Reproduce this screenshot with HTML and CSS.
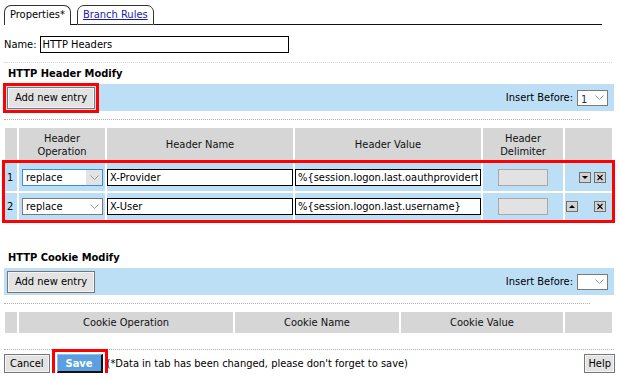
FILE: index.html
```html
<!DOCTYPE html>
<html lang="en">
<head>
    <meta charset="UTF-8">
    <title>HTTP Headers - Properties</title>
    <link rel="stylesheet" href="styles.css">
</head>
<body>
    <!-- Tabs -->
    <div class="tabs">
        <div class="tab active">Properties*</div>
        <div class="tab-gap"></div>
        <div class="tab"><a href="#">Branch Rules</a></div>
        <div class="tab-fill"></div>
    </div>

    <div class="name-row">
        <label>Name:</label>
        <input class="text name-input" type="text" value="HTTP Headers">
    </div>

    <div class="dots light"></div>

    <!-- Header modify -->
    <h3 class="section-title">HTTP Header Modify</h3>
    <div class="toolbar">
        <button class="btn marked">Add new entry</button>
        <div class="insert">
            Insert Before:
            <span class="combo small">
                <span class="combo-value num">1</span>
                <span class="combo-arrow"><svg width="9" height="5" viewBox="0 0 9 5"><path d="M0.5 0.5l4 4 4-4" fill="none" stroke="#9a9a9a"/></svg></span>
            </span>
        </div>
    </div>
    <div class="dots short"></div>

    <div class="grid header-grid">
        <div class="cols head">
            <div class="cell"></div>
            <div class="cell">Header<br>Operation</div>
            <div class="cell">Header Name</div>
            <div class="cell">Header Value</div>
            <div class="cell">Header<br>Delimiter</div>
            <div class="cell"></div>
        </div>
        <div class="rows marked-rows">
            <div class="cols row first">
                <div class="cell idx">1</div>
                <div class="cell">
                    <span class="combo focus">
                        <span class="combo-value">replace</span>
                        <span class="combo-arrow"><svg width="9" height="5" viewBox="0 0 9 5"><path d="M0.5 0.5l4 4 4-4" fill="none" stroke="#9a9a9a"/></svg></span>
                    </span>
                </div>
                <div class="cell"><input class="text" type="text" value="X-Provider"></div>
                <div class="cell"><input class="text" type="text" value="%{session.logon.last.oauthprovidertype}"></div>
                <div class="cell center"><span class="disabled-box"></span></div>
                <div class="cell actions">
                    <span class="mini hidden"></span>
                    <span class="mini"><svg width="12" height="11" viewBox="0 0 12 11"><rect x="0.5" y="0.5" width="11" height="10" fill="#d3d3d3" stroke="#707070"/><path d="M3 4h6l-3 3z" fill="#000"/></svg></span>
                    <span class="mini close"><svg width="12" height="11" viewBox="0 0 12 11"><rect x="0.5" y="0.5" width="11" height="10" fill="#d3d3d3" stroke="#707070"/><path d="M3.5 3l5 5M8.5 3l-5 5" stroke="#000" stroke-width="1.1"/></svg></span>
                </div>
            </div>
            <div class="cols row">
                <div class="cell idx">2</div>
                <div class="cell">
                    <span class="combo">
                        <span class="combo-value">replace</span>
                        <span class="combo-arrow"><svg width="9" height="5" viewBox="0 0 9 5"><path d="M0.5 0.5l4 4 4-4" fill="none" stroke="#9a9a9a"/></svg></span>
                    </span>
                </div>
                <div class="cell"><input class="text" type="text" value="X-User"></div>
                <div class="cell"><input class="text" type="text" value="%{session.logon.last.username}"></div>
                <div class="cell center"><span class="disabled-box"></span></div>
                <div class="cell actions">
                    <span class="mini"><svg width="12" height="11" viewBox="0 0 12 11"><rect x="0.5" y="0.5" width="11" height="10" fill="#d3d3d3" stroke="#707070"/><path d="M3 7h6l-3-3z" fill="#000"/></svg></span>
                    <span class="mini hidden"></span>
                    <span class="mini close"><svg width="12" height="11" viewBox="0 0 12 11"><rect x="0.5" y="0.5" width="11" height="10" fill="#d3d3d3" stroke="#707070"/><path d="M3.5 3l5 5M8.5 3l-5 5" stroke="#000" stroke-width="1.1"/></svg></span>
                </div>
            </div>
        </div>
    </div>

    <!-- Cookie modify -->
    <h3 class="section-title cookie-title">HTTP Cookie Modify</h3>
    <div class="toolbar">
        <button class="btn">Add new entry</button>
        <div class="insert">
            Insert Before:
            <span class="combo small">
                <span class="combo-value"></span>
                <span class="combo-arrow"><svg width="9" height="5" viewBox="0 0 9 5"><path d="M0.5 0.5l4 4 4-4" fill="none" stroke="#9a9a9a"/></svg></span>
            </span>
        </div>
    </div>
    <div class="dots short"></div>

    <div class="grid cookie-grid">
        <div class="cols head">
            <div class="cell"></div>
            <div class="cell">Cookie Operation</div>
            <div class="cell">Cookie Name</div>
            <div class="cell">Cookie Value</div>
            <div class="cell"></div>
        </div>
    </div>

    <div class="dots wide"></div>

    <div class="footer">
        <button class="btn">Cancel</button>
        <button class="btn save">Save</button>
        <span class="note">(*Data in tab has been changed, please don't forget to save)</span>
        <button class="btn help">Help</button>
    </div>
</body>
</html>
```

FILE: styles.css
```css
body {
    margin: 0;
    padding: 5px 0 0 4px;
    font-family: "DejaVu Sans Condensed", "DejaVu Sans", sans-serif;
    font-size: 11px;
    color: #000;
    background: #fff;
}

/* tabs */
.tabs {
    display: flex;
    align-items: flex-end;
    width: 598px;
    height: 20px;
}
.tab {
    height: 18px;
    line-height: 18px;
    padding: 0 5px;
    border: 1px solid #333;
    border-radius: 7px 7px 0 0;
    background: #fff;
}
.tab.active {
    border-bottom: none;
    height: 19px;
}
.tab a {
    color: #1a1aa6;
}
.tab-gap {
    width: 6px;
    border-bottom: 1px solid #111;
}
.tab-fill {
    flex: 1;
    border-bottom: 1px solid #111;
}

.name-row {
    display: flex;
    align-items: center;
    gap: 3px;
    margin-top: 11px;
}
.text {
    box-sizing: border-box;
    height: 17px;
    padding: 0 2px;
    border: 1px solid #000;
    font: inherit;
    color: #000;
    background: #fff;
    width: 100%;
}
.name-input {
    width: 249px;
}

.dots {
    width: 608px;
    margin-top: 9px;
    border-top: 1px dotted #b0b0b0;
}
.dots.light {
    border-top-color: #d6d6d6;
}
.dots.short {
    width: 586px;
    margin-top: 8px;
}
.dots.wide {
    width: 610px;
    margin-top: 16px;
}

.section-title {
    margin: 4px 0 3px 4px;
    font-size: 11px;
    line-height: 14px;
}
.cookie-title {
    margin-top: 31px;
}

.toolbar {
    display: flex;
    align-items: center;
    justify-content: space-between;
    width: 610px;
    height: 27px;
    box-sizing: border-box;
    padding: 0 6px 0 3px;
    background: #bcdff5;
}
.insert {
    display: flex;
    align-items: center;
    gap: 4px;
}

.btn {
    height: 22px;
    padding: 0 7px;
    border: 1px solid #777;
    background: #e3e3e3;
    box-shadow: inset 0 0 0 1px #f4f4f4;
    font: inherit;
    color: #000;
}
.btn.marked {
    outline: 3px solid #f00;
    outline-offset: 1px;
}

.combo {
    display: inline-flex;
    align-items: stretch;
    box-sizing: border-box;
    width: 81px;
    height: 17px;
    border: 1px solid #7a7a7a;
    background: #fff;
}
.combo.small {
    width: 31px;
    height: 16px;
}
.combo.focus {
    border-color: #3a8fd8;
}
.combo-value {
    flex: 1;
    padding-left: 3px;
    line-height: 15px;
}
.combo-value.num {
    color: #1c2c6a;
    padding-top: 1px;
}
.combo-arrow {
    display: flex;
    align-items: center;
    justify-content: center;
    width: 16px;
}
.combo.focus .combo-arrow {
    background: #e3e3e3;
}

/* grids */
.grid {
    margin-top: 8px;
    margin-left: 1px;
    width: 607px;
}
.cols {
    display: grid;
    column-gap: 2px;
}
.header-grid .cols {
    grid-template-columns: 12px 86px 186px 186px 80px 47px;
}
.cookie-grid .cols {
    grid-template-columns: 12px 214px 164px 162px 47px;
}
.head {
    height: 33px;
}
.cookie-grid .head {
    height: 21px;
}
.head .cell {
    display: flex;
    align-items: center;
    justify-content: center;
    text-align: center;
    line-height: 13px;
    background: #d6d6d6;
    color: #111;
}

.rows {
    margin-top: 2px;
    display: flex;
    flex-direction: column;
    gap: 2px;
}
.marked-rows {
    outline: 3px solid #f00;
    outline-offset: 0;
}
.row {
    height: 27px;
}
.row.first {
    height: 28px;
}
.row .cell {
    display: flex;
    align-items: center;
    background: #bcdff5;
}
.row .cell.idx {
    padding-left: 2px;
}
.row .cell:nth-child(2) {
    padding-left: 3px;
}
.center {
    justify-content: center;
}
.disabled-box {
    width: 48px;
    height: 15px;
    border: 1px solid #a8a8a8;
    background: #e2e2e2;
}
.actions {
    gap: 1px;
    padding-left: 1px;
}
.mini {
    display: flex;
    width: 12px;
    height: 11px;
}
.mini.hidden {
    visibility: hidden;
}
.mini.close {
    margin-left: 2px;
}

/* footer */
.footer {
    display: flex;
    align-items: center;
    width: 611px;
    margin-top: 4px;
}
.footer .btn {
    height: 19px;
    padding: 0 5px;
}
.btn.save {
    margin-left: 7px;
    padding: 0 8px;
    border: 1px solid #8ec0ef;
    border-right: 2px solid #111;
    border-bottom: 2px solid #111;
    background: #5b9fe0;
    box-shadow: none;
    color: #fff;
    font-weight: bold;
    outline: 3px solid #f00;
    outline-offset: 2px;
}
.note {
    margin-left: 4px;
}
.btn.help {
    margin-left: auto;
    padding: 0 3px;
}
```
